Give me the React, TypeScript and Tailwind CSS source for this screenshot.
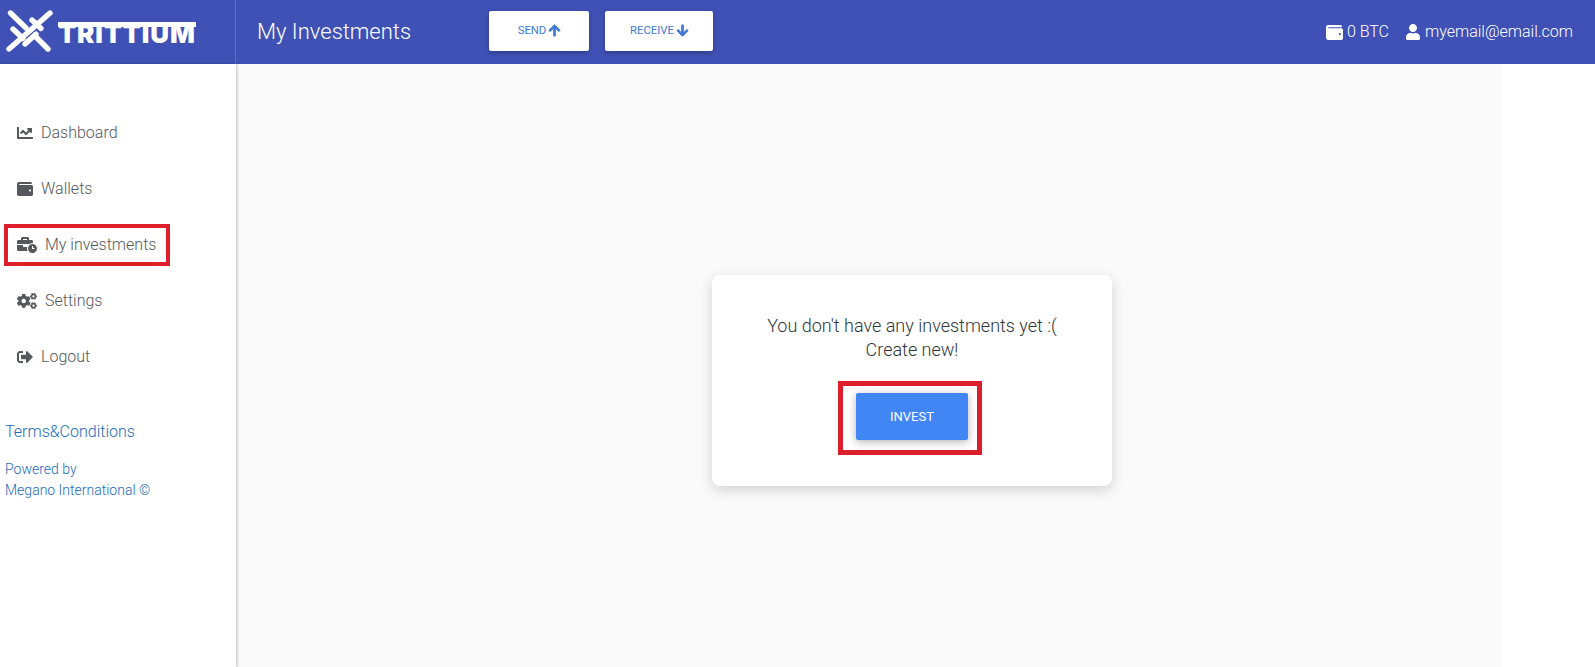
import { FaArrowDown, FaArrowUp, FaBusinessTime, FaChartLine, FaCogs, FaSignOutAlt, FaUser, FaWallet } from "react-icons/fa"
import type { ReactNode } from "react"

const Logo = () => (
  <div className="flex items-center">
    <svg width="50" height="46" viewBox="5 9 50 46" className="ml-[5px] shrink-0">
      <g stroke="#ffffff" strokeWidth="5.4" strokeLinecap="round" fill="none">
        <path d="M10.5 13 L26 28" />
        <path d="M50 13 L9 49" />
        <path d="M13 29 L23 38.5" />
        <path d="M25 44 L36 34" />
        <path d="M36 37 L48 49" />
        <path d="M32 20 L41 28.5" />
      </g>
    </svg>
    <div className="relative mt-[1px] ml-[3px] w-[138px] pt-[2px] text-center">
      <div className="font-['Inter',sans-serif] text-[26px] leading-[19px] font-black tracking-[1px] text-white">TRITTIUM</div>
      <div className="absolute top-0 left-0 h-[5px] w-full bg-white" />
    </div>
  </div>
)

const NavItem = ({ icon, label, gap = "gap-2" }: { icon: ReactNode; label: string; gap?: string }) => (
  <div className={`flex h-14 items-center pl-[17px] text-[#55585c] ${gap}`}>
    {icon}
    <span className="text-base font-light">{label}</span>
  </div>
)

const HeaderButton = ({ label, icon, width }: { label: string; icon: ReactNode; width: string }) => (
  <button className={`flex h-10 items-center justify-center gap-[2px] rounded-[2px] bg-white pl-[1px] text-[11.3px] font-normal text-[#4279d8] shadow-[0_2px_5px_rgba(0,0,0,0.26)] ${width}`}>
    {label}
    {icon}
  </button>
)

export default function App() {
  return (
    <div className="flex h-[667px] flex-col overflow-hidden bg-white font-['Roboto',sans-serif]">
      <header className="flex h-16 shrink-0 items-center bg-[#3f51b5] text-white">
        <div className="flex h-full w-[236px] shrink-0 items-center border-r border-[#5f6fc4]">
          <Logo />
        </div>
        <h1 className="mb-[2px] ml-[21px] w-[232px] text-[22px] font-light">My Investments</h1>
        <div className="mb-[2px] flex gap-4">
          <HeaderButton label="SEND" icon={<FaArrowUp className="mb-[2px] stroke-[30] text-[13px]" />} width="w-[100px]" />
          <HeaderButton label="RECEIVE" icon={<FaArrowDown className="mb-[2px] stroke-[30] text-[13px]" />} width="w-[108px]" />
        </div>
        <div className="ml-auto flex items-center pr-[22px] text-base font-light">
          <FaWallet className="mr-[4px] text-[17px]" />
          <span>0 BTC</span>
          <FaUser className="mr-1 ml-[16px] text-[16px]" />
          <span>myemail@email.com</span>
        </div>
      </header>

      <div className="flex min-h-0 flex-1">
        <aside className="z-10 w-[236px] shrink-0 bg-white pt-[41px] shadow-[1px_0_3px_rgba(0,0,0,0.25)]">
          <NavItem icon={<FaChartLine className="text-base" />} label="Dashboard" />
          <NavItem icon={<FaWallet className="text-base" />} label="Wallets" />
          <div className="relative">
            <NavItem icon={<FaBusinessTime className="text-[20px]" />} label="My investments" />
            <div className="absolute top-[7px] left-[4px] h-[42px] w-[166px] border-4 border-[#dc1f2b]" />
          </div>
          <NavItem icon={<FaCogs className="text-[20px]" />} label="Settings" />
          <NavItem icon={<FaSignOutAlt className="text-base" />} label="Logout" />
          <div className="mt-[35px] pl-[5px] font-light text-[#1a6ac0]">
            <p className="text-base">Terms&amp;Conditions</p>
            <p className="mt-[15px] text-[14px] leading-[21px]">
              Powered by
              <br />
              Megano International ©
            </p>
          </div>
        </aside>

        <main className="flex w-[1266px] items-center justify-center bg-[#fafafa] pt-[30px] pl-[85px]">
          <div className="flex h-[211px] w-[400px] flex-col items-center rounded-[8px] bg-white pt-[39px] shadow-[0_4px_14px_rgba(0,0,0,0.16)]">
            <p className="ml-[1px] text-center text-[18px] leading-[24px] font-light text-[#2f3640]">
              You don't have any investments yet :(
              <br />
              Create new!
            </p>
            <div className="mt-[19px] mr-[4px] border-[5px] border-[#dc1f2b] pt-[7px] pr-[9px] pb-[10px] pl-[13px]">
              <button className="block h-[47px] w-[112px] rounded-[2px] bg-[#4285f4] pl-[1px] text-[13px] font-normal text-white shadow-[0_2px_8px_rgba(0,0,0,0.3)]">
                INVEST
              </button>
            </div>
          </div>
        </main>
      </div>
    </div>
  )
}
